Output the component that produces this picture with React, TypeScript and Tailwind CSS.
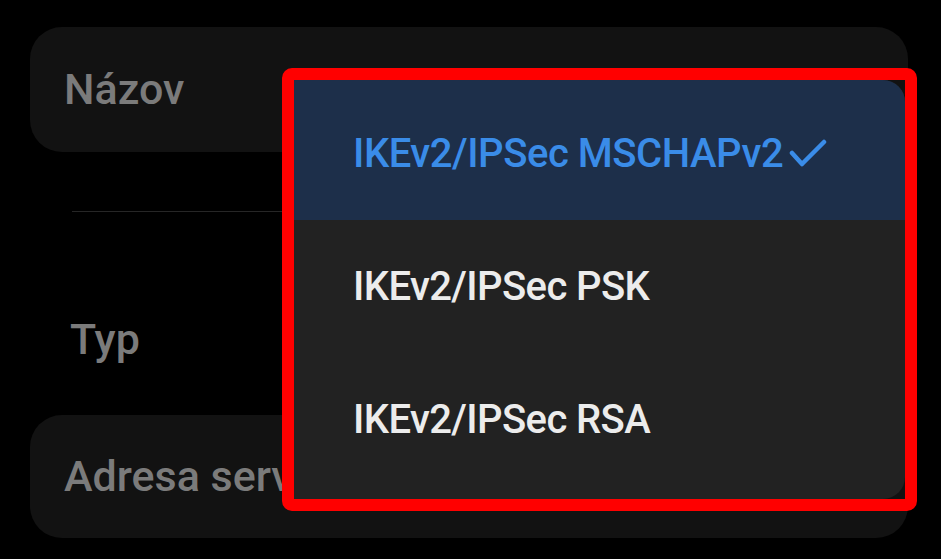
import React from "react";

const options = [
  { label: "IKEv2/IPSec MSCHAPv2", selected: true },
  { label: "IKEv2/IPSec PSK", selected: false },
  { label: "IKEv2/IPSec RSA", selected: false },
];

const Check = () => (
  <svg width="38" height="30" viewBox="0 0 38 30" fill="none" className="shrink-0">
    <polyline
      points="3,14 13,25 35,3"
      stroke="#3a8ce8"
      strokeWidth="4.5"
      strokeLinecap="round"
      strokeLinejoin="round"
    />
  </svg>
);

const App = () => {
  return (
    <div className="relative w-[941px] h-[559px] overflow-hidden bg-black font-['Roboto','Liberation_Sans',sans-serif]">
      <div className="flex flex-col pl-[30px] pr-[33px] pt-[27px]">
        <div className="flex h-[125px] items-center rounded-[32px] bg-[#121212] px-[34px]">
          <span className="text-[43px] font-medium leading-none text-[#7b7b7b]">Názov</span>
        </div>

        <div className="ml-[42px] mr-[40px] mt-[59px] h-px bg-[#262626]" />

        <div className="ml-[40px] mt-[106px] text-[43px] font-medium leading-none text-[#7b7b7b]">Typ</div>

        <div className="mt-[54px] flex h-[123px] items-center rounded-[32px] bg-[#121212] px-[34px]">
          <span className="whitespace-nowrap text-[43px] font-medium leading-none text-[#7b7b7b]">
            Adresa servera
          </span>
        </div>
      </div>

      {/* dropdown menu, with the red highlight frame around it */}
      <div className="absolute left-[282px] top-[68px] h-[443px] w-[635px] rounded-[10px] border-[12px] border-[#ff0000]">
        <div className="flex h-full flex-col overflow-hidden rounded-r-[22px] bg-[#222222]">
          {options.map((o, i) => (
            <div
              key={o.label}
              className={
                i === 0
                  ? "flex h-[140px] shrink-0 items-center gap-[6px] bg-[#1d2f4a] pl-[59px] pt-[8px]"
                  : "flex h-[133px] shrink-0 items-center pl-[59px]"
              }
            >
              <span
                className={
                  o.selected
                    ? "whitespace-nowrap text-[40px] font-medium leading-none tracking-[-0.45px] text-[#3a8ce8]"
                    : "whitespace-nowrap text-[40px] font-medium leading-none tracking-[-0.6px] text-[#ececec]"
                }
              >
                {o.label}
              </span>
              {o.selected && <Check />}
            </div>
          ))}
        </div>
      </div>
    </div>
  );
};

export default App;
